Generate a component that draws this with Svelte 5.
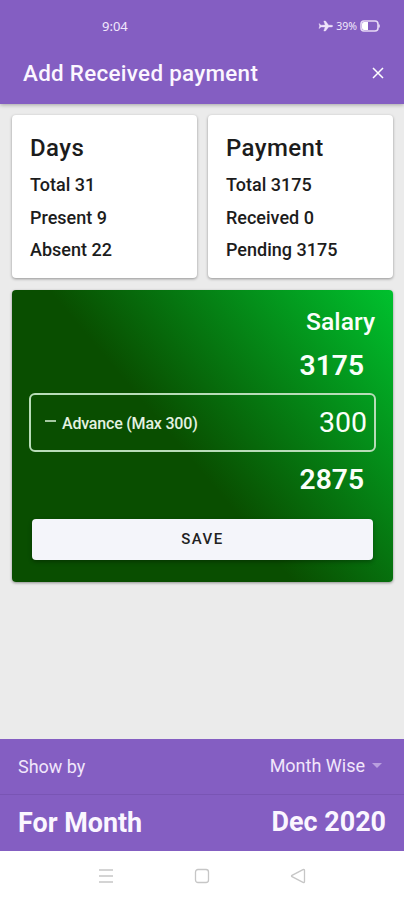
<script>
  const total = 3175;
  const maxAdvance = 300;

  let advance = $state(300);
  let remaining = $derived(total - advance);

  const cards = [
    { title: 'Days', rows: ['Total 31', 'Present 9', 'Absent 22'] },
    { title: 'Payment', rows: [`Total ${total}`, 'Received 0', `Pending ${total}`] }
  ];
</script>

<div class="screen">
  <header>
    <div class="status">
      <span class="clock">9:04</span>
      <div class="indicators">
        <svg class="plane" viewBox="0 0 16 12">
          <path d="M1 3.5 3 5.2 7.2 5.1 5.8 1h1.7l3.1 4.2 3 .1c1.6.2 1.6 1.4 0 1.6l-3 .1L7.5 11H5.8l1.4-4-4.2-.1L1 8.6 1.7 6z" />
        </svg>
        <span>39%</span>
        <svg class="battery" viewBox="0 0 20 12">
          <rect x="1" y="1" width="17" height="10" rx="3" />
          <path class="level" d="M4 2h4v8H4a2 2 0 0 1-2-2V4a2 2 0 0 1 2-2z" />
          <path d="M19 4.5v3" />
        </svg>
      </div>
    </div>
    <div class="toolbar">
      <h1>Add Received payment</h1>
      <button class="close" aria-label="Close">
        <svg viewBox="0 0 12 12"><path d="M1 1l10 10M11 1L1 11" /></svg>
      </button>
    </div>
  </header>

  <main>
    <div class="cards">
      {#each cards as card}
        <section class="card">
          <h2>{card.title}</h2>
          {#each card.rows as row}
            <p>{row}</p>
          {/each}
        </section>
      {/each}
    </div>

    <section class="salary">
      <h3>Salary</h3>
      <div class="amount">{total}</div>
      <label class="advance">
        <span class="minus"></span>
        <span class="label">Advance (Max {maxAdvance})</span>
        <input type="text" inputmode="numeric" bind:value={advance} />
      </label>
      <div class="amount rest">{remaining}</div>
      <button class="save">SAVE</button>
    </section>
  </main>

  <footer>
    <div class="show">
      <span>Show by</span>
      <span class="select">Month Wise <i class="caret"></i></span>
    </div>
    <div class="month">
      <span>For Month</span>
      <span class="date">Dec 2020</span>
    </div>
  </footer>

  <nav>
    <svg viewBox="0 0 16 16"><path d="M1 2h14M1 8h14M1 14h14" /></svg>
    <svg viewBox="0 0 16 16"><rect x="1.5" y="1.5" width="13" height="13" rx="2.5" /></svg>
    <svg viewBox="0 0 16 16"><path d="M13 1.6 2 7.3q-1 .7 0 1.4l11 5.7q1.5.4 1.5-1V2.6q0-1.4-1.5-1z" /></svg>
  </nav>
</div>

<style>
  :global(body) {
    background: #ebebeb;
  }

  .screen {
    display: flex;
    flex-direction: column;
    width: 404px;
    height: 900px;
    background: #ebebeb;
    font-family: Roboto, sans-serif;
    color: #1c1c1c;
  }

  h1, h2, h3, p {
    margin: 0;
    font-weight: 500;
  }

  button {
    border: 0;
    padding: 0;
    font-family: inherit;
  }

  svg {
    display: block;
    fill: none;
  }

  header {
    height: 104px;
    background: #845ec2;
    color: #fbf6ff;
    box-shadow: 0 1px 4px rgba(0, 0, 0, 0.3);
  }

  .status {
    display: flex;
    justify-content: space-between;
    align-items: center;
    height: 52px;
    padding: 0 24px 0 102px;
    font-family: "Noto Sans", sans-serif;
    font-size: 13px;
    color: #f2e8fc;
  }
  .indicators {
    display: flex;
    align-items: center;
    font-size: 10.5px;
  }
  .plane {
    width: 16px;
    height: 12px;
    margin-right: 2px;
    fill: #efe3fb;
    stroke: #efe3fb;
    stroke-width: 0.4;
  }
  .battery {
    width: 20px;
    height: 12px;
    margin-left: 3px;
    stroke: #e6d8f5;
    stroke-width: 1.6;
  }
  .battery .level {
    fill: #fff;
    stroke: none;
  }

  .toolbar {
    display: flex;
    justify-content: space-between;
    align-items: center;
    height: 42px;
    padding: 0 20px 0 23px;
  }
  h1 {
    font-size: 22.4px;
    letter-spacing: 0.3px;
    white-space: nowrap;
  }
  .close {
    background: none;
  }
  .close svg {
    width: 12px;
    height: 12px;
    stroke: #fff;
    stroke-width: 1.5;
  }

  main {
    flex: 1;
    padding: 11px 11px 0 12px;
  }

  .cards {
    display: grid;
    grid-template-columns: 1fr 1fr;
    gap: 11px;
  }
  .card {
    height: 163px;
    box-sizing: border-box;
    padding: 17px 18px 0;
    background: #fff;
    border-radius: 4px;
    box-shadow: 0 1px 3px rgba(0, 0, 0, 0.38);
  }
  h2 {
    margin-bottom: 5px;
    font-size: 24px;
    line-height: 32px;
    letter-spacing: 0.4px;
  }
  .card p {
    font-size: 18px;
    line-height: 32.7px;
    white-space: nowrap;
  }

  .salary {
    display: flex;
    flex-direction: column;
    height: 292px;
    box-sizing: border-box;
    margin-top: 12px;
    padding: 16px 17px 0;
    background: linear-gradient(50deg, #094e00 45%, #00c12e 100%);
    border-radius: 4px;
    box-shadow: 0 1px 3px rgba(0, 0, 0, 0.4);
    color: #fafffa;
  }
  h3 {
    padding-right: 1px;
    font-size: 24.7px;
    line-height: 32px;
    text-align: right;
  }
  .amount {
    padding: 10px 12px 0 0;
    font-size: 28.2px;
    line-height: 36px;
    font-weight: 600;
    text-align: right;
  }

  .advance {
    display: flex;
    align-items: center;
    height: 59px;
    box-sizing: border-box;
    margin-top: 9px;
    padding: 0 7px 0 14px;
    border: 2px solid #b8dcb8;
    border-radius: 6px;
  }
  .minus {
    width: 11px;
    height: 2px;
    margin: -4px 6px 0 0;
    background: #a4c8a0;
  }
  .label {
    padding-top: 1px;
    font-size: 16px;
    font-weight: 500;
    letter-spacing: -0.2px;
    color: #e3f2e1;
    white-space: nowrap;
  }
  input {
    flex: 1;
    min-width: 0;
    padding: 0;
    border: 0;
    background: none;
    outline: none;
    font: 28.5px Roboto, sans-serif;
    color: inherit;
    text-align: right;
  }

  .save {
    height: 41px;
    margin: 21px 3px 0;
    padding-bottom: 2px;
    background: #f4f5fa;
    border-radius: 4px;
    box-shadow: 0 2px 4px rgba(0, 0, 0, 0.3);
    font-size: 15px;
    font-weight: 500;
    letter-spacing: 1.5px;
    color: #222;
  }

  footer {
    height: 112px;
    background: #845ec2;
    color: #fbf6ff;
  }
  .show, .month {
    display: flex;
    justify-content: space-between;
    align-items: center;
    height: 56px;
    box-sizing: border-box;
    padding: 0 18px;
  }
  .show {
    border-bottom: 1px solid #7955b4;
    font-size: 18px;
    color: #f1e6fb;
  }
  .select {
    display: flex;
    align-items: center;
    padding: 0 4px 2px 0;
  }
  .caret {
    margin-left: 7px;
    border: 5px solid transparent;
    border-top-color: #b99fdf;
    border-bottom: 0;
  }
  .month {
    padding-bottom: 1px;
    font-size: 26.9px;
    font-weight: 700;
  }
  .date {
    padding-bottom: 2px;
  }

  nav {
    display: flex;
    justify-content: center;
    align-items: center;
    gap: 80px;
    height: 49px;
    background: #fff;
  }
  nav svg {
    width: 16px;
    height: 16px;
    stroke: #c6c6c6;
    stroke-width: 1.3;
  }
</style>
